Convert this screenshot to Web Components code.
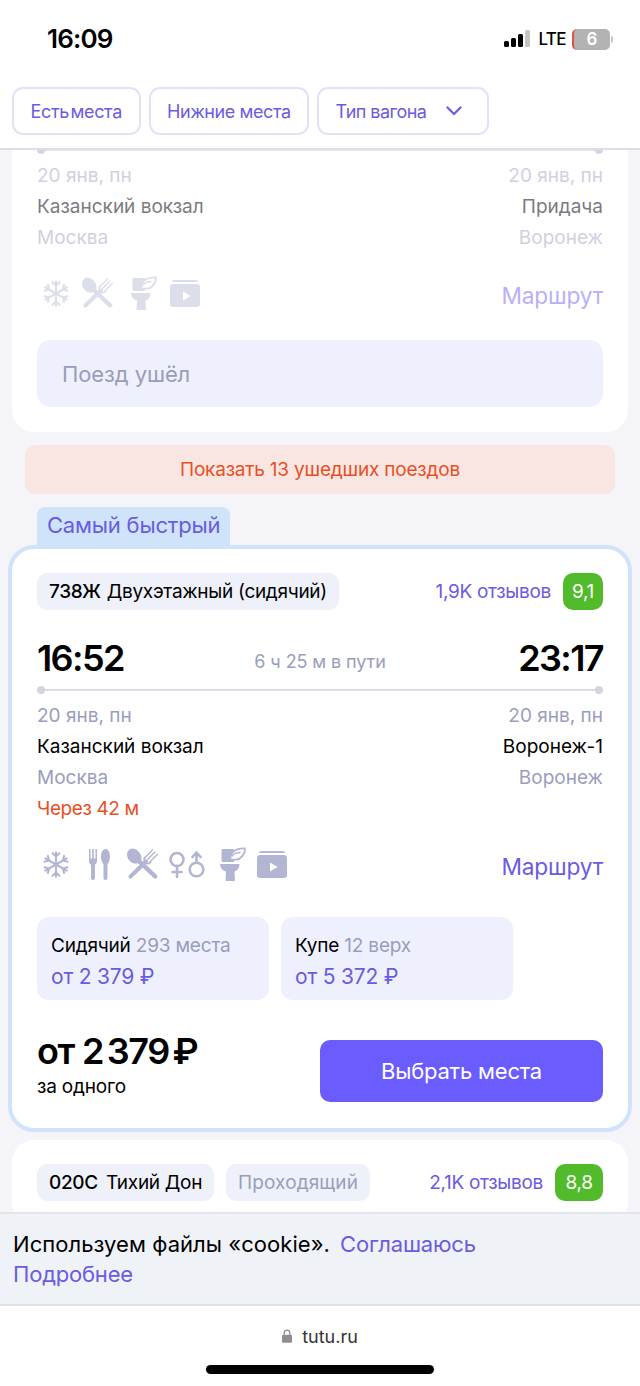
<!DOCTYPE html>
<html lang="ru">
<head>
<meta charset="utf-8">
<title>tutu.ru</title>
<style>
  html, body { margin: 0; padding: 0; background: #f4f4f9; }
  body { font-family: Inter, "Noto Sans", sans-serif; }
  .gone-note { display: flex; align-items: center; height: 67px; margin-top: 29px; padding: 0 25px; background: #eef0fd; border-radius: 14px; color: #9a9cb8; font-size: 22px; letter-spacing: -.1px; }
  .tariffs { display: flex; gap: 12px; margin-top: 35px; }
  .next { margin-top: 8px; }
</style>
</head>
<body>
<ticket-app>
  <status-bar slot="top"></status-bar>
  <filter-bar slot="top">
    <filter-chip style="word-spacing:-3.500px">Есть места</filter-chip>
    <filter-chip style="letter-spacing:-.42px">Нижние места</filter-chip>
    <filter-chip arrow style="letter-spacing:-.55px">Тип вагона</filter-chip>
  </filter-bar>

  <train-card cut>
    <route-block faded cut
      from-date="20 янв, пн" to-date="20 янв, пн"
      from-station="Казанский вокзал" to-station="Придача"
      from-city="Москва" to-city="Воронеж"></route-block>
    <amenity-row faded icons="snow cross:13 toilet:17 video:13"></amenity-row>
    <div class="gone-note" slot="foot">Поезд ушёл</div>
  </train-card>

  <gone-banner>Показать 13 ушедших поездов</gone-banner>

  <train-card label="Самый быстрый">
    <train-head number="738Ж" name="Двухэтажный (сидячий)" reviews="1,9K отзывов" score="9,1"></train-head>
    <route-block from-time="16:52" to-time="23:17" duration="6 ч 25 м в пути"
      from-date="20 янв, пн" to-date="20 янв, пн"
      from-station="Казанский вокзал" to-station="Воронеж-1"
      from-city="Москва" to-city="Воронеж" note="Через 42 м"></route-block>
    <amenity-row icons="snow fork:20 cross:17 gender:10 toilet:15 video:11"></amenity-row>
    <div class="tariffs" slot="foot">
      <tariff-box name="Сидячий" seats="293 места" price="от 2 379 ₽"></tariff-box>
      <tariff-box name="Купе" seats="12 верх" price="от 5 372 ₽"></tariff-box>
    </div>
    <buy-row slot="foot" price="2 379 ₽" note="за одного" action="Выбрать места"></buy-row>
  </train-card>

  <train-card class="next">
    <train-head style="--score-w:48px;--num-gap:8px" number="020С" name="Тихий Дон" extra="Проходящий" reviews="2,1K отзывов" score="8,8"></train-head>
  </train-card>

  <cookie-bar slot="bottom"></cookie-bar>
  <browser-bar slot="bottom"></browser-bar>
</ticket-app>

<script>
const arm = `<path d="M13 14.500V2.200M9.600 3.200L13 6.600l3.400-3.400"/>`;
const ICONS = {
  snow: { w: 26, h: 29, body: `<g fill="none" stroke="currentColor" stroke-width="2.100" stroke-linecap="round" stroke-linejoin="round">
    ${[0, 60, 120, 180, 240, 300].map(r => `<g transform="rotate(${r} 13 14.500)">${arm}</g>`).join('')}
  </g>` },
  fork: { w: 21, h: 31, body: `<g fill="currentColor">
    <path d="M0 0h1.500v9.500h1.700V0h1.600v9.500h1.700V0H8v12c0 2-.8 3-2 3.500V29a2 2 0 01-4 0V15.500C.8 15 0 14 0 12z"/>
    <path d="M16.500 0c2.600 0 4.500 3.200 4.500 7.500 0 3.500-1.100 6.200-2.500 7.500v14a2 2 0 01-4 0V15c-1.400-1.300-2.500-4-2.500-7.500C12 3.200 13.900 0 16.500 0z"/>
  </g>` },
  cross: { w: 32, h: 32, body: `<path fill="currentColor" d="M2.500 1.500c3-2 7-.5 9.800 3 2.200 2.800 2.700 5.500 1.800 7.600L29.800 27a2.200 2.200 0 01-3.100 3.100L11 15.300c-2.200 1-5 .4-7.700-1.800C-.6 10.200-1.200 4.200 2.500 1.500z"/>
  <g fill="none" stroke="currentColor" stroke-linecap="round">
    <path d="M3.500 28.500L19 13.500" stroke-width="4"/>
    <path d="M18 9.500L25.500 2M20.500 11.500L28 4M22.800 14L30.500 6.300" stroke-width="1.400"/>
    <path d="M17.500 9.500c-.6 2 .2 4.300 1.500 5.300 1.500 1 3.300 1 4.500-.5" stroke-width="1.800"/>
  </g>` },
  gender: { w: 36, h: 27, body: `<g fill="none" stroke="currentColor" stroke-width="2.600" stroke-linecap="round" stroke-linejoin="round">
    <circle cx="8" cy="8.500" r="6.500"/><path d="M8 15v11M3.500 21h9"/>
    <circle cx="27.500" cy="18.500" r="6.800"/><path d="M27.500 11.700V2M23.500 6l4-4.500 4 4.500"/>
  </g>` },
  toilet: { w: 26, h: 34, body: `<path fill="currentColor" d="M1.500 3.500c0-.8.7-1.500 1.500-1.500h11v13H3c-.8 0-1.500-.7-1.500-1.500z"/>
    <path fill="currentColor" d="M0 17h19.500c0 3.500-1.800 6.400-5 7.600L15 34H5.500l.5-9.400C2.500 23.500 0 20.500 0 17z"/>
    <path fill="#fff" stroke="currentColor" stroke-width="1.800" stroke-linejoin="round" d="M10.500 12.500C9.500 6 15.500 1 25 1.500c0 5.500-3.500 10.500-9 11.200z"/>
    <path fill="none" stroke="currentColor" stroke-width="1.500" stroke-linecap="round" d="M12 9c2-2.500 4.500-3.500 8-3.500"/>` },
  video: { w: 30, h: 27, body: `<g fill="currentColor">
    <path d="M4 0h22a2 2 0 012 2H2a2 2 0 012-2z"/>
    <path fill-rule="evenodd" d="M3 4h24a3 3 0 013 3v17a3 3 0 01-3 3H3a3 3 0 01-3-3V7a3 3 0 013-3zm10 7.500v9l7.500-4.500z"/>
  </g>` }
};

class TicketApp extends HTMLElement {
  constructor() {
    super();
    this.attachShadow({ mode: 'open' });
    this.shadowRoot.innerHTML = `
    <style>
      :host { display: flex; flex-direction: column; height: 1386px; overflow: hidden; background: #f4f4f9; }
      header { flex: none; background: #fff; border-bottom: 2px solid #dcdfea; height: 148px; }
      main { flex: 1; min-height: 0; overflow: hidden; display: flex; flex-direction: column; }
      footer { flex: none; }
    </style>
    <header><slot name="top"></slot></header>
    <main><slot></slot></main>
    <footer><slot name="bottom"></slot></footer>`;
  }
}

class StatusBar extends HTMLElement {
  constructor() {
    super();
    this.attachShadow({ mode: 'open' });
    this.shadowRoot.innerHTML = `
    <style>
      :host { display: flex; align-items: center; height: 78px; padding: 0 27px 0 47px; box-sizing: border-box; color: #000; }
      .time { font-size: 26px; font-weight: 600; letter-spacing: -.8px; flex: 1; margin-top: -2px; }
      .lte { font-size: 17px; font-weight: 500; letter-spacing: -.6px; margin: 0 6px 0 8px; }
      .bat { width: 38px; height: 21px; box-sizing: border-box; background: #b3b3b3; border-left: 2px solid #e0533f; border-radius: 5px; color: #fff; font-size: 17px; font-weight: 600; text-align: center; line-height: 21px; }
      svg { display: block; }
      .nub { width: 2px; height: 7px; background: #c4c4c4; border-radius: 0 2px 2px 0; margin-left: 1px; }
    </style>
    <span class="time">16:09</span>
    <svg width="26" height="22" viewBox="0 0 26 22"><rect x="0" y="13" width="5" height="6" rx="1.500"/><rect x="7" y="10" width="5" height="9" rx="1.500"/><rect x="14" y="6" width="5" height="13" rx="1.500"/><rect x="21" y="2" width="5" height="17" rx="1.500" fill="#c4c4c4"/></svg>
    <span class="lte">LTE</span>
    <span class="bat">6</span><span class="nub"></span>`;
  }
}

class FilterBar extends HTMLElement {
  constructor() {
    super();
    this.attachShadow({ mode: 'open' });
    this.shadowRoot.innerHTML = `
    <style>
      :host { display: flex; gap: 8px; padding: 9px 12px 0; }
    </style>
    <slot></slot>`;
  }
}

class FilterChip extends HTMLElement {
  constructor() {
    super();
    this.attachShadow({ mode: 'open' });
    const arrow = this.hasAttribute('arrow')
      ? `<svg width="16" height="10" viewBox="0 0 16 10"><path d="M1.500 1.500L8 8l6.500-6.500" fill="none" stroke="#6a5be2" stroke-width="2.200" stroke-linecap="round" stroke-linejoin="round"/></svg>`
      : '';
    this.shadowRoot.innerHTML = `
    <style>
      :host { display: flex; align-items: center; gap: 20px; height: 48px; padding: 0 16.500px; box-sizing: border-box; border: 2px solid #e3e0fa; border-radius: 11px; color: #6a5be2; font-size: 18px; letter-spacing: -.3px; background: #fff; }
      svg { margin-right: 8px; }
    </style>
    <span><slot></slot></span>${arrow}`;
  }
}

class TrainCard extends HTMLElement {
  constructor() {
    super();
    this.attachShadow({ mode: 'open' });
    const label = this.getAttribute('label');
    const cls = (label ? 'hot ' : '') + (this.hasAttribute('cut') ? 'cut' : '');
    this.shadowRoot.innerHTML = `
    <style>
      :host { display: block; flex: none; }
      .tab { display: inline-block; margin-left: 37px; height: 38px; padding: 0 10px; line-height: 37px; background: #cfe3fb; color: #6a5be2; font-size: 22px; letter-spacing: -.2px; border-radius: 8px 8px 0 0; vertical-align: bottom; }
      .card { background: #fff; border-radius: 22px; padding: 24px 25px 24px; margin: 0 12px; }
      .card.hot { border: 4px solid #cfe3fb; margin: 0 8px; padding: 24px 25px 26px; border-radius: 26px; }
      .card.cut { padding: 0 25px 25px; border-radius: 0 0 22px 22px; }
    </style>
    ${label ? `<div class="tab">${label}</div>` : ''}
    <div class="card ${cls}"><slot></slot><slot name="foot"></slot></div>`;
  }
}

class TrainHead extends HTMLElement {
  constructor() {
    super();
    this.attachShadow({ mode: 'open' });
    const a = n => this.getAttribute(n);
    this.shadowRoot.innerHTML = `
    <style>
      :host { display: flex; align-items: center; height: 37px; font-size: 19px; letter-spacing: -.3px; }
      .pill { flex: none; display: flex; align-items: center; height: 37px; padding: 0 12px; background: #eef1f9; border-radius: 10px; color: #000; white-space: nowrap; }
      .pill b { font-weight: 500; margin-right: var(--num-gap, 6px); }
      .extra { margin-left: 12px; color: #9a9dbd; letter-spacing: .1px; }
      .reviews { margin-left: auto; color: #6a5be2; white-space: nowrap; }
      .score { flex: none; margin-left: 12px; height: 37px; width: var(--score-w, 40px); background: #52bb2b; color: #fff; border-radius: 10px; display: flex; align-items: center; justify-content: center; }
    </style>
    <span class="pill"><b>${a('number')}</b>${a('name')}</span>
    ${a('extra') ? `<span class="pill extra">${a('extra')}</span>` : ''}
    <span class="reviews">${a('reviews')}</span>
    <span class="score">${a('score')}</span>`;
  }
}

class RouteBlock extends HTMLElement {
  constructor() {
    super();
    this.attachShadow({ mode: 'open' });
    const a = n => this.getAttribute(n);
    const faded = this.hasAttribute('faded');
    this.shadowRoot.innerHTML = `
    <style>
      :host { display: block; font-size: 19px; line-height: 31px; color: ${faded ? '#7b7b7f' : '#000'}; ${this.hasAttribute('cut') ? 'margin-top: -9px;' : ''} }
      .times { display: flex; align-items: center; justify-content: space-between; height: 46px; margin-top: 25px; }
      .time { font-size: 36px; font-weight: 600; letter-spacing: -1.600px; color: #000; }
      .dur { color: #9a9dbd; font-size: 18px; letter-spacing: -.1px; margin: 6px 2px 0 0; }
      .rail { position: relative; height: 2px; background: #d9dbe6; margin: 8px 0 9px; }
      .rail::before, .rail::after { content: ""; position: absolute; top: -3px; width: 8px; height: 8px; border-radius: 50%; background: #d3d5e2; }
      .rail::before { left: 0; }
      .rail::after { right: 0; }
      .row { display: flex; justify-content: space-between; }
      .soft { color: ${faded ? '#cfd1e0' : '#9a9dbd'}; }
      .note { color: #e8501f; font-size: 19px; letter-spacing: -.4px; }
    </style>
    ${a('from-time') ? `<div class="times"><span class="time">${a('from-time')}</span><span class="dur">${a('duration')}</span><span class="time">${a('to-time')}</span></div>` : ''}
    <div class="rail" ${faded ? 'style="background:#e4e5ee"' : ''}></div>
    <div class="row soft"><span>${a('from-date')}</span><span>${a('to-date')}</span></div>
    <div class="row"><span>${a('from-station')}</span><span>${a('to-station')}</span></div>
    <div class="row soft"><span>${a('from-city')}</span><span>${a('to-city')}</span></div>
    ${a('note') ? `<div class="note">${a('note')}</div>` : ''}`;
  }
}

class AmenityRow extends HTMLElement {
  constructor() {
    super();
    this.attachShadow({ mode: 'open' });
    const faded = this.hasAttribute('faded');
    const svgs = this.getAttribute('icons').split(' ').map(item => {
      const [name, ml] = item.split(':');
      const ic = ICONS[name];
      return `<svg width="${ic.w}" height="${ic.h}" viewBox="0 0 ${ic.w} ${ic.h}" style="margin-left:${ml || 0}px">${ic.body}</svg>`;
    }).join('');
    this.shadowRoot.innerHTML = `
    <style>
      :host { display: flex; align-items: center; height: 36px; margin-top: 22px; color: ${faded ? '#dcdee9' : '#b3b6d2'}; }
      svg { flex: none; display: block; }
      a { margin-left: auto; font-size: 22.700px; letter-spacing: -.2px; color: ${faded ? '#b9b0fb' : '#6a5be2'}; padding-top: 4px; }
      .icons { display: flex; align-items: center; margin-left: 6px; }
    </style>
    <div class="icons">${svgs}</div>
    <a>Маршрут</a>`;
  }
}

class TariffBox extends HTMLElement {
  constructor() {
    super();
    this.attachShadow({ mode: 'open' });
    const a = n => this.getAttribute(n);
    this.shadowRoot.innerHTML = `
    <style>
      :host { display: block; width: 232px; height: 83px; box-sizing: border-box; padding: 17px 14px 0; background: #eef0fd; border-radius: 12px; font-size: 19px; letter-spacing: -.2px; color: #000; }
      .seats { color: #9a9dbd; }
      .price { color: #6a5be2; font-size: 21px; margin-top: 7px; }
    </style>
    <div>${a('name')} <span class="seats">${a('seats')}</span></div>
    <div class="price">${a('price')}</div>`;
  }
}

class BuyRow extends HTMLElement {
  constructor() {
    super();
    this.attachShadow({ mode: 'open' });
    const a = n => this.getAttribute(n);
    this.shadowRoot.innerHTML = `
    <style>
      :host { display: flex; align-items: flex-start; justify-content: space-between; margin-top: 40px; color: #000; }
      .left { margin-top: -8px; }
      .price { font-size: 36px; font-weight: 600; letter-spacing: -1.400px; word-spacing: -4px; line-height: 38px; white-space: nowrap; }
      .ot { margin-right: 8px; }
      .note { font-size: 19px; letter-spacing: -.2px; line-height: 22px; margin-top: 6px; }
      button { width: 283px; height: 62px; border: 0; border-radius: 10px; background: #6b5cff; color: #fff; font: inherit; font-size: 22px; letter-spacing: -.2px; }
    </style>
    <div class="left"><div class="price"><span class="ot">от</span>${a('price')}</div><div class="note">${a('note')}</div></div>
    <button>${a('action')}</button>`;
  }
}

class GoneBanner extends HTMLElement {
  constructor() {
    super();
    this.attachShadow({ mode: 'open' });
    this.shadowRoot.innerHTML = `
    <style>
      :host { display: flex; flex: none; align-items: center; justify-content: center; height: 49px; margin: 13px 25px 13px; background: #f9e6e3; border-radius: 10px; color: #e8501f; font-size: 19px; letter-spacing: -.2px; }
    </style>
    <slot></slot>`;
  }
}

class CookieBar extends HTMLElement {
  constructor() {
    super();
    this.attachShadow({ mode: 'open' });
    this.shadowRoot.innerHTML = `
    <style>
      :host { display: block; height: 94px; box-sizing: border-box; padding: 15px 13px 0; background: #eff2f7; border-top: 2px solid #e2e5ec; border-bottom: 2px solid #dfe2e8; font-size: 22px; line-height: 30px; color: #000; }
      a { color: #6a5be2; letter-spacing: -.2px; }
      .txt { letter-spacing: .05px; }
      .ok { margin-left: 4px; }
    </style>
    <div><span class="txt">Используем файлы «cookie».</span> <a class="ok">Соглашаюсь</a></div>
    <a>Подробнее</a>`;
  }
}

class BrowserBar extends HTMLElement {
  constructor() {
    super();
    this.attachShadow({ mode: 'open' });
    this.shadowRoot.innerHTML = `
    <style>
      :host { display: flex; flex-direction: column; align-items: center; height: 80px; background: #fff; color: #333; font-size: 18px; }
      .addr { display: flex; align-items: center; gap: 10px; margin-top: 17px; height: 26px; }
      .home { width: 228px; height: 9px; border-radius: 5px; background: #000; margin-top: 16px; }
    </style>
    <div class="addr">
      <svg width="10" height="14" viewBox="0 0 11 15"><path d="M2.500 6V4a3 3 0 016 0v2" fill="none" stroke="#8e8e8e" stroke-width="1.500"/><rect y="6" width="11" height="9" rx="1.500" fill="#8e8e8e"/></svg>
      <span>tutu.ru</span>
    </div>
    <div class="home"></div>`;
  }
}

customElements.define('ticket-app', TicketApp);
customElements.define('status-bar', StatusBar);
customElements.define('filter-bar', FilterBar);
customElements.define('filter-chip', FilterChip);
customElements.define('train-card', TrainCard);
customElements.define('train-head', TrainHead);
customElements.define('route-block', RouteBlock);
customElements.define('amenity-row', AmenityRow);
customElements.define('tariff-box', TariffBox);
customElements.define('buy-row', BuyRow);
customElements.define('gone-banner', GoneBanner);
customElements.define('cookie-bar', CookieBar);
customElements.define('browser-bar', BrowserBar);
</script>
</body>
</html>
